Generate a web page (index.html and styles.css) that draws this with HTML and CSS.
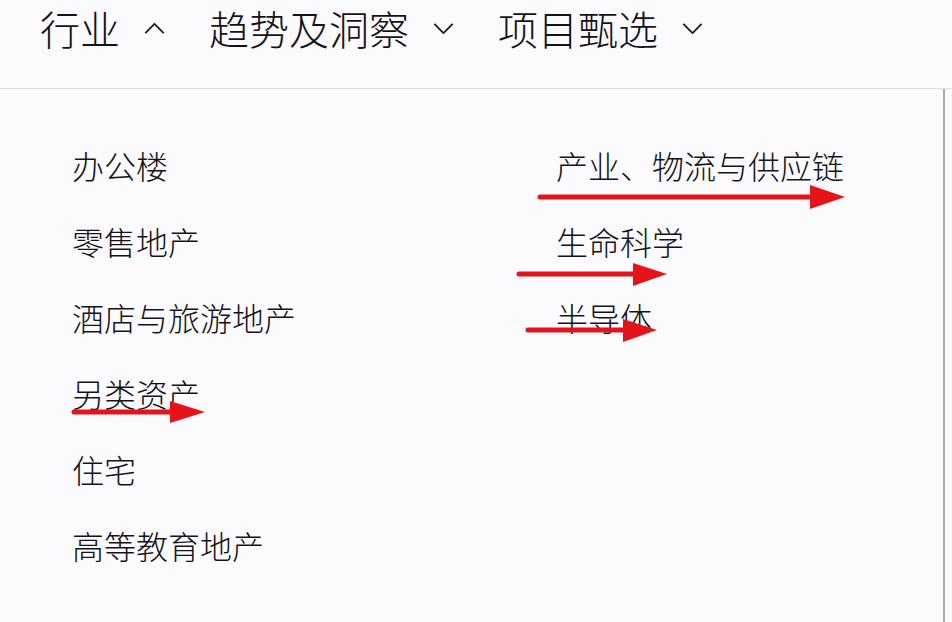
FILE: index.html
```html
<!DOCTYPE html>
<html lang="zh-CN">
<head>
    <meta charset="UTF-8">
    <meta name="viewport" content="width=device-width, initial-scale=1.0">
    <title>行业</title>
    <link rel="stylesheet" href="styles.css">
</head>
<body>
    <div class="page">
        <nav class="top-nav">
            <a href="#" class="nav-item open">行业
                <svg class="chevron" viewBox="0 0 22 12"><polyline points="1,11 11,1 21,11"/></svg>
            </a>
            <a href="#" class="nav-item">趋势及洞察
                <svg class="chevron" viewBox="0 0 22 12"><polyline points="1,1 11,11 21,1"/></svg>
            </a>
            <a href="#" class="nav-item">项目甄选
                <svg class="chevron" viewBox="0 0 22 12"><polyline points="1,1 11,11 21,1"/></svg>
            </a>
        </nav>

        <div class="dropdown">
            <ul class="menu-col">
                <li><a href="#">办公楼</a></li>
                <li><a href="#">零售地产</a></li>
                <li><a href="#">酒店与旅游地产</a></li>
                <li><a href="#">另类资产</a></li>
                <li><a href="#">住宅</a></li>
                <li><a href="#">高等教育地产</a></li>
            </ul>
            <ul class="menu-col">
                <li><a href="#">产业、物流与供应链</a></li>
                <li><a href="#">生命科学</a></li>
                <li><a href="#">半导体</a></li>
            </ul>
        </div>

        <!-- 标注箭头 -->
        <svg class="marks" viewBox="0 0 952 622">
            <g class="arrow">
                <line x1="540" y1="197" x2="815" y2="197"/>
                <polygon points="810,185 845,197 810,209"/>
            </g>
            <g class="arrow">
                <line x1="519" y1="274" x2="638" y2="274"/>
                <polygon points="633,263 667,274 633,286"/>
            </g>
            <g class="arrow">
                <line x1="528" y1="330" x2="628" y2="330"/>
                <polygon points="623,319 657,330 623,342"/>
            </g>
            <g class="arrow">
                <line x1="74" y1="412" x2="175" y2="412"/>
                <polygon points="170,401 205,412 170,423"/>
            </g>
        </svg>
    </div>
</body>
</html>
```

FILE: styles.css
```css
body {
    margin: 0;
    background-color: #ffffff;
    font-family: "Noto Sans CJK SC", "Noto Sans", sans-serif;
    color: #141218;
}

.page {
    position: relative;
    width: 952px;
    height: 622px;
    overflow: hidden;
    background-color: #fbfbfd;
}

.top-nav {
    display: flex;
    align-items: center;
    gap: 44px;
    height: 89px;
    padding: 0 0 32px 40px;
    box-sizing: border-box;
    border-bottom: 1px solid #dcdde4;
}

.nav-item {
    display: flex;
    align-items: center;
    color: inherit;
    text-decoration: none;
    font-size: 40px;
    font-weight: 300;
    line-height: 40px;
}

.chevron {
    width: 21px;
    height: 11px;
    margin-left: 24px;
    fill: none;
    stroke: #1d1b22;
    stroke-width: 2;
}

.dropdown {
    display: grid;
    grid-template-columns: 484px 1fr;
    width: 945px;
    height: 533px;
    box-sizing: border-box;
    padding: 38px 0 0 72px;
    border-right: 2px solid #a9abb3;
}

.menu-col {
    list-style-type: none;
    margin: 0;
    padding: 0;
}

.menu-col li {
    height: 76px;
    line-height: 76px;
    font-size: 32px;
    font-weight: 300;
}

.menu-col a {
    color: inherit;
    text-decoration: none;
}

.marks {
    position: absolute;
    top: 0;
    left: 0;
    width: 952px;
    height: 622px;
    pointer-events: none;
}

.arrow line {
    stroke: #e5141b;
    stroke-width: 5;
    stroke-linecap: round;
}

.arrow polygon {
    fill: #e5141b;
}
```
